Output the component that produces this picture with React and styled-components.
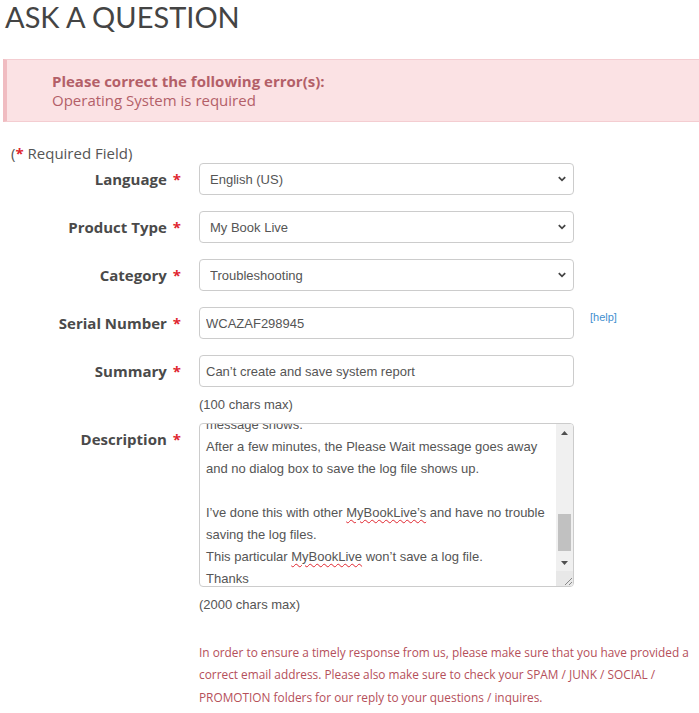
import React, { useEffect, useRef } from "react";
import styled, { createGlobalStyle } from "styled-components";

const GlobalStyle = createGlobalStyle`
  html, body {
    margin: 0;
    padding: 0;
    background: #fff;
    overflow: hidden;
  }
  body {
    font-family: "Open Sans", "Noto Sans", sans-serif;
    color: #4a4a4a;
  }
`;

const Page = styled.div`
  width: 699px;
  height: 713px;
  overflow: hidden;
  padding: 0 0 0 3px;
  box-sizing: border-box;
`;

const Title = styled.h1`
  margin: 0;
  padding: 0 0 0 2px;
  font-family: "Lato", "Open Sans", sans-serif;
  font-size: 29px;
  line-height: 34px;
  font-weight: 400;
  color: #444;
`;

const ErrorBox = styled.div`
  margin-top: 25px;
  margin-right: -20px;
  background: #fbe2e4;
  border: 1px solid #f4cdd1;
  border-left: 4px solid #f0bcc1;
  padding: 12px 0 11px 45px;
  color: #b35f68;
  font-size: 15px;
  line-height: 19px;
`;

const ErrorTitle = styled.div`
  font-weight: 700;
`;

const Required = styled.div`
  margin: 21px 0 0 8px;
  font-size: 15px;
  line-height: 20px;
  color: #555;
`;

const Star = styled.span`
  color: #e0262f;
  font-weight: 700;
`;

const Form = styled.div`
  display: flex;
  flex-direction: column;
`;

const Row = styled.div`
  display: grid;
  grid-template-columns: 178px 375px auto;
  column-gap: 18px;
  margin-bottom: 16px;
`;

const Label = styled.label`
  text-align: right;
  font-size: 15px;
  font-weight: 700;
  line-height: 32px;
  color: #4a4a4a;
  white-space: nowrap;

  ${Star} {
    margin-left: 6px;
  }
`;

const SelectWrap = styled.div`
  position: relative;
  height: 32px;
`;

const Select = styled.select`
  appearance: none;
  width: 100%;
  height: 32px;
  box-sizing: border-box;
  border: 1px solid #ccc;
  border-radius: 4px;
  background: #fff;
  padding: 0 30px 0 10px;
  font-family: "Liberation Sans", Arial, sans-serif;
  font-size: 13px;
  color: #555;
  outline: none;
`;

const Chevron = styled.svg`
  position: absolute;
  right: 7px;
  top: 12px;
  pointer-events: none;
`;

const Input = styled.input`
  width: 100%;
  height: 32px;
  box-sizing: border-box;
  border: 1px solid #ccc;
  border-radius: 4px;
  background: #fff;
  padding: 0 6px;
  font-family: "Liberation Sans", Arial, sans-serif;
  font-size: 13px;
  color: #555;
  outline: none;
`;

const Help = styled.a`
  margin-left: -2px;
  font-family: "Liberation Sans", Arial, sans-serif;
  font-size: 11px;
  line-height: 20px;
  color: #3f8fcf;
  text-decoration: none;
`;

const Hint = styled.div`
  margin: -8px 0 8px 196px;
  font-family: "Liberation Sans", Arial, sans-serif;
  font-size: 13px;
  line-height: 20px;
  color: #555;
`;

const TextBox = styled.div`
  display: flex;
  height: 164px;
  box-sizing: border-box;
  border: 1px solid #ccc;
  border-radius: 4px;
  overflow: hidden;
  background: #fff;
`;

const TextView = styled.div`
  flex: 1;
  overflow: hidden;
  padding: 0 6px;
  font-family: "Liberation Sans", Arial, sans-serif;
  font-size: 13px;
  line-height: 22px;
  color: #555;
`;

const TextInner = styled.div`
  padding: 6px 0;
`;

const Line = styled.div`
  white-space: pre;
  min-height: 22px;
`;

const Misspelled = styled.span`
  text-decoration: underline wavy #e0262f;
  text-decoration-thickness: 1px;
  text-underline-offset: 2px;
`;

const ScrollBar = styled.div`
  width: 17px;
  display: flex;
  flex-direction: column;
  background: #f0f0f0;
`;

const ArrowBtn = styled.div`
  height: 17px;
  display: flex;
  align-items: center;
  justify-content: center;
`;

const Track = styled.div`
  flex: 1;
  display: flex;
  flex-direction: column;
`;

const Thumb = styled.div`
  margin: 0 2px;
  height: 37px;
  background: #c1c1c1;
`;

const Corner = styled.div`
  height: 15px;
  display: flex;
  align-items: flex-end;
  justify-content: flex-end;
  background: #e8e8e8;
`;

const Note = styled.p`
  margin: 18px 0 0 196px;
  font-size: 11.85px;
  line-height: 22.4px;
  color: #b5505a;
  max-width: 500px;
`;

const descLines = [
  "Hello,",
  "",
  "I have a My Book Live 3TB drive that has been working",
  "fine for a few years on my home network.",
  "Recently I have been having some problems with it,",
  "so I wanted to create a system report to send",
  "to support.",
  "",
  "I open the dashboard in the browser and go to",
  "Settings > Utilities.",
  "Under System Diagnostics, I click on",
  "Create and Save System Report.",
  "The Please Wait dialog shows and the",
  "message shows.",
  "After a few minutes, the Please Wait message goes away",
  "and no dialog box to save the log file shows up.",
  "",
  ["I’ve done this with other ", "MyBookLive’s", " and have no trouble"],
  "saving the log files.",
  ["This particular ", "MyBookLive", " won’t save a log file."],
  "Thanks",
  "",
  "",
];

function ChevronIcon() {
  return (
    <Chevron width="10" height="8" viewBox="0 0 10 8">
      <path d="M1.8 2.2 L5 5.3 L8.2 2.2" fill="none" stroke="#444" strokeWidth="1.8" />
    </Chevron>
  );
}

function Description() {
  const view = useRef(null);

  useEffect(() => {
    // put "message shows." half cut at the top, like the saved view
    const idx = descLines.indexOf("message shows.");
    if (view.current) view.current.scrollTop = 6 + idx * 22 + 10;
  }, []);

  return (
    <TextBox>
      <TextView ref={view}>
        <TextInner>
          {descLines.map((l, i) => (
            <Line key={i}>
              {Array.isArray(l) ? (
                <>
                  {l[0]}
                  <Misspelled>{l[1]}</Misspelled>
                  {l[2]}
                </>
              ) : (
                l
              )}
            </Line>
          ))}
        </TextInner>
      </TextView>
      <ScrollBar>
        <ArrowBtn>
          <svg width="7" height="4" viewBox="0 0 7 4">
            <path d="M0 4 L3.5 0 L7 4 Z" fill="#505050" />
          </svg>
        </ArrowBtn>
        <Track>
          <div style={{ height: 73 }} />
          <Thumb />
        </Track>
        <ArrowBtn>
          <svg width="7" height="4" viewBox="0 0 7 4">
            <path d="M0 0 L3.5 4 L7 0 Z" fill="#505050" />
          </svg>
        </ArrowBtn>
        <Corner>
          <svg width="12" height="12" viewBox="0 0 12 12">
            <path d="M11 4 L4 11 M11 8 L8 11" stroke="#888" strokeWidth="1" />
          </svg>
        </Corner>
      </ScrollBar>
    </TextBox>
  );
}

export default function App() {
  return (
    <>
      <GlobalStyle />
      <Page>
        <Title>ASK A QUESTION</Title>

        <ErrorBox>
          <ErrorTitle>Please correct the following error(s):</ErrorTitle>
          <div>Operating System is required</div>
        </ErrorBox>

        <Required>
          (<Star>*</Star> Required Field)
        </Required>

        <Form>
          <Row>
            <Label>
              Language<Star>*</Star>
            </Label>
            <SelectWrap>
              <Select defaultValue="en">
                <option value="en">English (US)</option>
              </Select>
              <ChevronIcon />
            </SelectWrap>
          </Row>
          <Row>
            <Label>
              Product Type<Star>*</Star>
            </Label>
            <SelectWrap>
              <Select defaultValue="mbl">
                <option value="mbl">My Book Live</option>
              </Select>
              <ChevronIcon />
            </SelectWrap>
          </Row>
          <Row>
            <Label>
              Category<Star>*</Star>
            </Label>
            <SelectWrap>
              <Select defaultValue="ts">
                <option value="ts">Troubleshooting</option>
              </Select>
              <ChevronIcon />
            </SelectWrap>
          </Row>
          <Row>
            <Label>
              Serial Number<Star>*</Star>
            </Label>
            <Input defaultValue="WCAZAF298945" />
            <Help href="#">[help]</Help>
          </Row>
          <Row>
            <Label>
              Summary<Star>*</Star>
            </Label>
            <Input defaultValue="Can’t create and save system report" />
          </Row>
          <Hint>(100 chars max)</Hint>
          <Row>
            <Label>
              Description<Star>*</Star>
            </Label>
            <Description />
          </Row>
          <Hint>(2000 chars max)</Hint>
        </Form>

        <Note>
          In order to ensure a timely response from us, please make sure that
          you have provided a correct email address. Please also make sure to
          check your SPAM / JUNK / SOCIAL / PROMOTION folders for our reply to
          your questions / inquires.
        </Note>
      </Page>
    </>
  );
}
